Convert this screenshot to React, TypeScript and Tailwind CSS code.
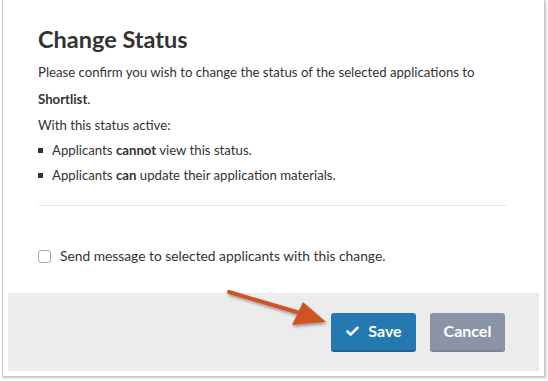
import { Check } from 'lucide-react';

// Change-status confirmation modal, with an annotation arrow pointing at Save.

const BODY_FONT = "font-['Lato','Open_Sans',sans-serif]";

export default function App() {
  return (
    <div className={`relative w-[548px] h-[381px] bg-white ${BODY_FONT} text-[#333]`}>
      <div className="ml-[2px] w-[543px] h-[377px] flex flex-col bg-white border-x border-b border-[#c9c9c9] shadow-[1px_1px_2px_rgba(0,0,0,0.25)]">
        <div className="px-[35px] pt-[23px] flex-1">
          <h2 className="text-[23.5px] font-bold leading-[32px] text-[#333]">Change Status</h2>
          <p className="mt-[4px] text-[13.2px] leading-[27px]">
            Please confirm you wish to change the status of the selected applications to <b>Shortlist</b>.
          </p>
          <p className="text-[13.2px] leading-[25px]">With this status active:</p>
          <ul className="text-[13.2px] leading-[25px]">
            <li className="flex items-center gap-[9px]">
              <span className="w-[5px] h-[5px] bg-[#333]" />
              <span>Applicants <b>cannot</b> view this status.</span>
            </li>
            <li className="flex items-center gap-[9px]">
              <span className="w-[5px] h-[5px] bg-[#333]" />
              <span>Applicants <b>can</b> update their application materials.</span>
            </li>
          </ul>
          <div className="mt-[17px] h-px bg-[#e8e8e8] mr-[2px]" />
          <label className="mt-[40px] flex items-center gap-[9px] text-[13.8px]">
            <span className="w-[13px] h-[13px] rounded-[3px] border border-[#aaa] bg-white" />
            <span>Send message to selected applicants with this change.</span>
          </label>
        </div>
        <div className="mx-[5px] mb-[5px] h-[78px] bg-[#ececec] flex items-center justify-end gap-[14px] pr-[34px]">
          <button className="w-[85px] h-[39px] rounded-[3px] bg-[#2479b0] border-b-2 border-[#1d6494] text-white text-[16px] font-bold flex items-center justify-center gap-[8px]">
            <Check size={15} strokeWidth={4} />
            Save
          </button>
          <button className="w-[75px] h-[39px] rounded-[3px] bg-[#8a94a5] border-b-2 border-[#7b8596] text-white text-[16px] font-bold">
            Cancel
          </button>
        </div>
      </div>
      {/* annotation arrow */}
      <svg className="absolute left-0 top-0 pointer-events-none" width="548" height="381">
        <defs>
          <filter id="sh" x="-20%" y="-20%" width="140%" height="140%">
            <feDropShadow dx="1" dy="2" stdDeviation="1.5" floodColor="#000" floodOpacity="0.35" />
          </filter>
        </defs>
        <g filter="url(#sh)">
          <line x1="229" y1="292" x2="300" y2="313" stroke="#d05327" strokeWidth="4" strokeLinecap="round" />
          <polygon points="326,322 292,325 303,302" fill="#d05327" />
        </g>
      </svg>
    </div>
  );
}
